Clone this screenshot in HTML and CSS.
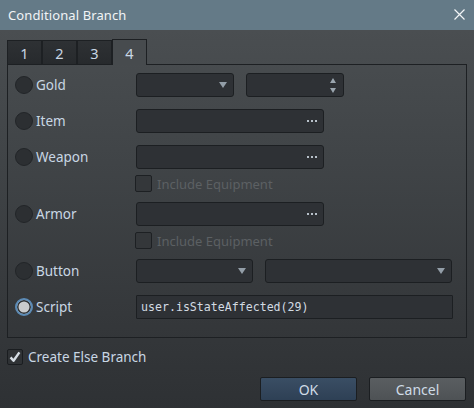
FILE: index.html
```html
<!DOCTYPE html>
<html>
<head>
<meta charset="utf-8">
<title>Conditional Branch</title>
<link rel="stylesheet" href="styles.css">
</head>
<body>
<div class="window">
  <div class="titlebar">
    <span class="title">Conditional Branch</span>
    <svg class="close" width="11" height="11" viewBox="0 0 11 11"><path d="M0.5 0.5 L10.5 10.5 M10.5 0.5 L0.5 10.5" stroke="#f2f5f7" stroke-width="1.2" fill="none"/></svg>
  </div>
  <div class="content">
    <div class="tabs">
      <div class="tab">1</div>
      <div class="tab">2</div>
      <div class="tab">3</div>
      <div class="tab active">4</div>
    </div>
    <div class="panel">
      <div class="row">
        <div class="opt"><span class="radio"></span><span class="label">Gold</span></div>
        <div class="combo w98"><span class="arrow"></span></div>
        <div class="spin w98"><span class="up"></span><span class="down"></span></div>
      </div>
      <div class="row">
        <div class="opt"><span class="radio"></span><span class="label">Item</span></div>
        <div class="field w188"><span class="dots"><i></i><i></i><i></i></span></div>
      </div>
      <div class="row">
        <div class="opt"><span class="radio"></span><span class="label">Weapon</span></div>
        <div class="field w188"><span class="dots"><i></i><i></i><i></i></span></div>
      </div>
      <div class="sub"><span class="box"></span><span class="disabled">Include Equipment</span></div>
      <div class="row after-sub">
        <div class="opt"><span class="radio"></span><span class="label">Armor</span></div>
        <div class="field w188"><span class="dots"><i></i><i></i><i></i></span></div>
      </div>
      <div class="sub"><span class="box"></span><span class="disabled">Include Equipment</span></div>
      <div class="row after-sub">
        <div class="opt"><span class="radio"></span><span class="label">Button</span></div>
        <div class="combo w117"><span class="arrow"></span></div>
        <div class="combo w187"><span class="arrow"></span></div>
      </div>
      <div class="row">
        <div class="opt"><span class="radio on"></span><span class="label">Script</span></div>
        <div class="field script w317">user.isStateAffected(29)</div>
      </div>
    </div>
    <div class="else">
      <span class="box checked">
        <svg width="16" height="16" viewBox="0 0 16 16"><path d="M3.6 8.4 L6.5 11.8 L12.4 3.4" stroke="#d6dde4" stroke-width="2.4" fill="none" stroke-linejoin="round"/></svg>
      </span>
      <span class="label">Create Else Branch</span>
    </div>
    <div class="buttons">
      <div class="btn ok">OK</div>
      <div class="btn cancel">Cancel</div>
    </div>
  </div>
</div>
</body>
</html>
```

FILE: styles.css
```css
html, body {
  margin: 0;
  padding: 0;
  background: #2e3134;
}

.window {
  width: 474px;
  height: 408px;
  display: flex;
  flex-direction: column;
  font-family: "Noto Sans", "DejaVu Sans", sans-serif;
  font-size: 13px;
  color: #c9d7e4;
  overflow: hidden;
}

.titlebar {
  height: 30px;
  flex: none;
  background: #647a87;
  display: flex;
  align-items: center;
  justify-content: space-between;
  padding: 0 9px 0 8px;
  box-sizing: border-box;
}

.title {
  color: #f1f4f6;
  font-size: 13px;
  letter-spacing: 0.1px;
}

.close {
  display: block;
  margin-top: -1px;
}

.content {
  flex: 1;
  background: linear-gradient(#4a4e51 0%, #404447 35%, #35383b 75%, #2e3134 100%);
  padding: 9px 7px 0 7px;
  display: flex;
  flex-direction: column;
}

/* tab strip */
.tabs {
  display: flex;
  height: 25px;
  align-items: flex-end;
}

.tab {
  width: 35px;
  height: 24px;
  box-sizing: border-box;
  border: 1px solid #1d2023;
  border-bottom: none;
  background: linear-gradient(#2e3134, #272a2d);
  color: #c9d7e4;
  font-size: 14.5px;
  display: flex;
  align-items: center;
  justify-content: center;
}

.tab.active {
  height: 26px;
  margin-bottom: -1px;
  background: #474b4e;
  position: relative;
  z-index: 1;
}

/* page */
.panel {
  height: 274px;
  box-sizing: border-box;
  border: 1px solid #1d2023;
  padding: 8px 0 0 7px;
  display: flex;
  flex-direction: column;
}

.row {
  display: flex;
  align-items: center;
  height: 24px;
  gap: 12px;
}

.row + .row {
  margin-top: 12px;
}

.row.after-sub {
  margin-top: 10px;
}

.opt {
  width: 121px;
  margin-right: -12px;
  display: flex;
  align-items: center;
  gap: 3px;
}

.radio {
  width: 18px;
  height: 18px;
  box-sizing: border-box;
  border-radius: 50%;
  background: #2c2f32;
  border: 1px solid #222528;
  flex: none;
}

.radio.on {
  border: 2px solid #5c8bb6;
  background: #c9cbcd;
  box-shadow: inset 0 0 0 1.5px #2c2f32;
}

.label {
  color: #c9d7e4;
  font-size: 13.5px;
}

.combo, .spin, .field {
  height: 24px;
  box-sizing: border-box;
  border: 1px solid #1c1f22;
  border-radius: 3px;
  background: #2e3135;
  position: relative;
  flex: none;
}

.w98 { width: 98px; }
.w117 { width: 117px; }
.w187 { width: 187px; }
.w188 { width: 188px; }
.w317 { width: 317px; }

.arrow {
  position: absolute;
  right: 6px;
  top: 8px;
  width: 0;
  height: 0;
  border-left: 4px solid transparent;
  border-right: 4px solid transparent;
  border-top: 6px solid #939ea8;
}

.spin .up, .spin .down {
  position: absolute;
  right: 7px;
  width: 0;
  height: 0;
  border-left: 3.5px solid transparent;
  border-right: 3.5px solid transparent;
}

.spin .up {
  top: 4px;
  border-bottom: 5px solid #9aa5ae;
}

.spin .down {
  top: 14px;
  border-top: 5px solid #9aa5ae;
}

.dots {
  position: absolute;
  right: 6px;
  top: 10px;
  display: flex;
  gap: 2px;
}

.dots i {
  width: 2px;
  height: 2px;
  background: #b7c0c9;
}

.field.script {
  font-family: "DejaVu Sans Mono", monospace;
  font-size: 11.6px;
  color: #d3dbe3;
  padding-left: 4px;
  line-height: 22px;
  border-radius: 1px;
}

/* sub options */
.sub {
  margin-top: 6px;
  margin-left: 120px;
  height: 17px;
  display: flex;
  align-items: center;
  gap: 5px;
}

.box {
  width: 17px;
  height: 17px;
  box-sizing: border-box;
  border: 1px solid #1d2023;
  border-radius: 2px;
  background: #34373a;
  flex: none;
  display: block;
}

.disabled {
  color: #5c6063;
  font-size: 13px;
}

/* bottom area */
.else {
  margin-top: 11px;
  display: flex;
  align-items: center;
  gap: 5px;
  height: 16px;
}

.else .box {
  width: 16px;
  height: 16px;
  background: #2f3235;
  border-color: #1a1d20;
}

.else .box svg {
  display: block;
  margin: -1px 0 0 -1px;
}

.buttons {
  margin-top: 12px;
  display: flex;
  justify-content: flex-end;
  gap: 12px;
  padding-right: 1px;
}

.btn {
  width: 97px;
  height: 24px;
  box-sizing: border-box;
  border: 1px solid #1b1e21;
  border-radius: 2px;
  display: flex;
  align-items: center;
  justify-content: center;
  color: #cfdbe6;
  font-size: 14px;
}

.btn.ok {
  background: linear-gradient(#3a4e64, #2e4055);
}

.btn.cancel {
  background: linear-gradient(#5a5e61, #4e5255);
}
```
